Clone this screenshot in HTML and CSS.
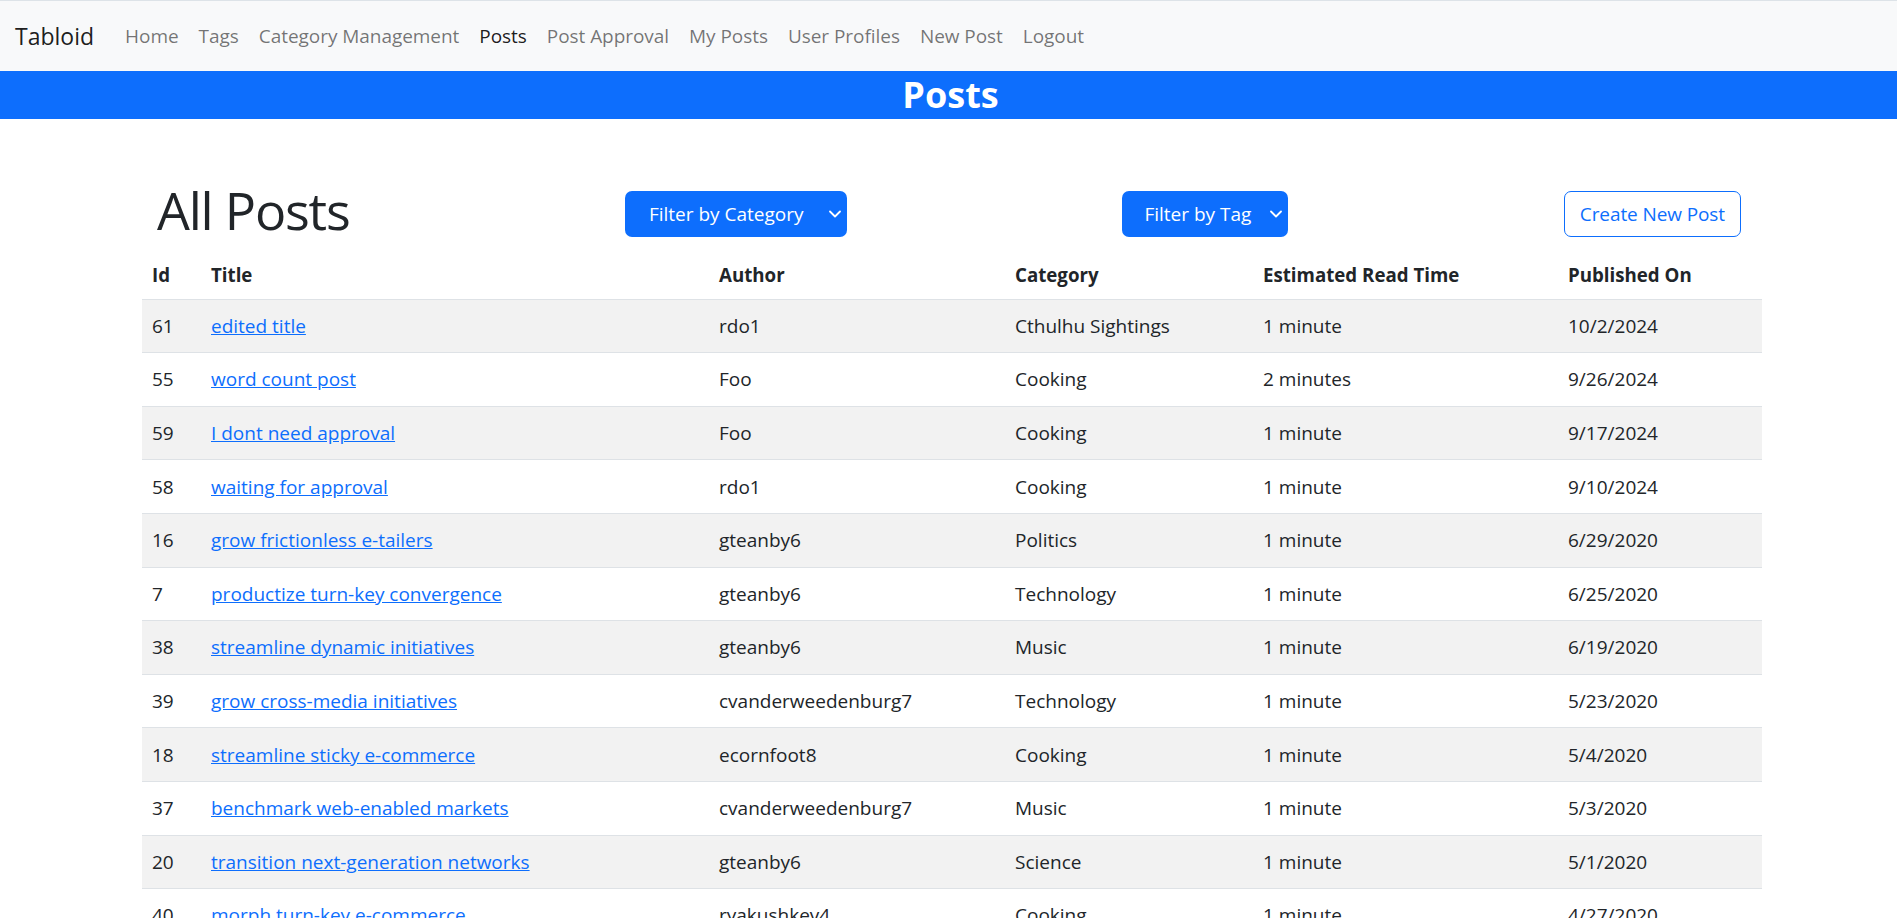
FILE: index.html
```html
<!DOCTYPE html>
<html lang="en">
<head>
<meta charset="utf-8">
<title>Tabloid</title>
<link rel="stylesheet" href="styles.css">
</head>
<body>
<nav class="navbar">
  <a class="brand" href="#">Tabloid</a>
  <ul class="nav">
    <li><a class="nav-link" href="#">Home</a></li>
    <li><a class="nav-link" href="#">Tags</a></li>
    <li><a class="nav-link" href="#">Category Management</a></li>
    <li><a class="nav-link active" href="#">Posts</a></li>
    <li><a class="nav-link" href="#">Post Approval</a></li>
    <li><a class="nav-link" href="#">My Posts</a></li>
    <li><a class="nav-link" href="#">User Profiles</a></li>
    <li><a class="nav-link" href="#">New Post</a></li>
    <li><a class="nav-link" href="#">Logout</a></li>
  </ul>
</nav>
<header class="page-banner"><h1 class="banner-title">Posts</h1></header>
<main class="container">
  <div class="toolbar">
    <h2 class="page-title">All Posts</h2>
    <button class="select-btn select-cat" type="button"><span>Filter by Category</span><svg class="chev" viewBox="0 0 12 8" width="12" height="8"><path d="M1 1.5l5 5 5-5" fill="none" stroke="#fff" stroke-width="1.8" stroke-linecap="round" stroke-linejoin="round"/></svg></button>
    <button class="select-btn select-tag" type="button"><span>Filter by Tag</span><svg class="chev" viewBox="0 0 12 8" width="12" height="8"><path d="M1 1.5l5 5 5-5" fill="none" stroke="#fff" stroke-width="1.8" stroke-linecap="round" stroke-linejoin="round"/></svg></button>
    <button class="outline-btn" type="button">Create New Post</button>
  </div>
  <table class="posts">
    <colgroup>
      <col class="c-id"><col class="c-title"><col class="c-author"><col class="c-cat"><col class="c-time"><col class="c-date">
    </colgroup>
    <thead>
      <tr><th>Id</th><th>Title</th><th>Author</th><th>Category</th><th>Estimated Read Time</th><th>Published On</th></tr>
    </thead>
    <tbody>
      <tr><td>61</td><td><a href="#">edited title</a></td><td>rdo1</td><td>Cthulhu Sightings</td><td>1 minute</td><td>10/2/2024</td></tr>
      <tr><td>55</td><td><a href="#">word count post</a></td><td>Foo</td><td>Cooking</td><td>2 minutes</td><td>9/26/2024</td></tr>
      <tr><td>59</td><td><a href="#">I dont need approval</a></td><td>Foo</td><td>Cooking</td><td>1 minute</td><td>9/17/2024</td></tr>
      <tr><td>58</td><td><a href="#">waiting for approval</a></td><td>rdo1</td><td>Cooking</td><td>1 minute</td><td>9/10/2024</td></tr>
      <tr><td>16</td><td><a href="#">grow frictionless e-tailers</a></td><td>gteanby6</td><td>Politics</td><td>1 minute</td><td>6/29/2020</td></tr>
      <tr><td>7</td><td><a href="#">productize turn-key convergence</a></td><td>gteanby6</td><td>Technology</td><td>1 minute</td><td>6/25/2020</td></tr>
      <tr><td>38</td><td><a href="#">streamline dynamic initiatives</a></td><td>gteanby6</td><td>Music</td><td>1 minute</td><td>6/19/2020</td></tr>
      <tr><td>39</td><td><a href="#">grow cross-media initiatives</a></td><td>cvanderweedenburg7</td><td>Technology</td><td>1 minute</td><td>5/23/2020</td></tr>
      <tr><td>18</td><td><a href="#">streamline sticky e-commerce</a></td><td>ecornfoot8</td><td>Cooking</td><td>1 minute</td><td>5/4/2020</td></tr>
      <tr><td>37</td><td><a href="#">benchmark web-enabled markets</a></td><td>cvanderweedenburg7</td><td>Music</td><td>1 minute</td><td>5/3/2020</td></tr>
      <tr><td>20</td><td><a href="#">transition next-generation networks</a></td><td>gteanby6</td><td>Science</td><td>1 minute</td><td>5/1/2020</td></tr>
      <tr><td>40</td><td><a href="#">morph turn-key e-commerce</a></td><td>ryakushkev4</td><td>Cooking</td><td>1 minute</td><td>4/27/2020</td></tr>
    </tbody>
  </table>
</main>
</body>
</html>
```

FILE: styles.css
```css
html, body {
  margin: 0;
  overflow: hidden;
}
body {
  font-family: "Open Sans", "Noto Sans", sans-serif;
  font-size: 19px;
  line-height: 30px;
  color: #212529;
  background: #fff;
}
.navbar {
  display: flex;
  align-items: center;
  height: 70px;
  border-top: 1px solid #dde3e8;
  background: #f8f9fa;
  padding: 0 15px;
}
.brand {
  font-size: 23px;
  line-height: 37px;
  color: rgba(0, 0, 0, 0.9);
  text-decoration: none;
  margin-right: 21px;
}
.nav {
  display: flex;
  list-style: none;
  margin: 0;
  padding: 0;
}
.nav-link {
  display: block;
  padding: 8px 10px;
  color: rgba(0, 0, 0, 0.55);
  text-decoration: none;
  letter-spacing: -0.05px;
}
.nav-link.active {
  color: rgba(0, 0, 0, 0.9);
}
.page-banner {
  background: #0d6efd;
  text-align: center;
}
.banner-title {
  margin: 0;
  font-size: 36px;
  line-height: 48px;
  font-weight: 700;
  color: #fff;
  padding-left: 4px;
}
.container {
  width: 1620px;
  margin-left: 142px;
  padding-top: 63px;
}
.toolbar {
  display: flex;
  align-items: center;
  justify-content: space-between;
  padding: 0 21px 0 15px;
}
.page-title {
  margin: 0;
  font-size: 52px;
  line-height: 56px;
  padding-bottom: 8px;
  font-weight: 400;
  letter-spacing: -1.2px;
}
.select-btn {
  display: flex;
  align-items: center;
  justify-content: space-between;
  height: 46px;
  padding: 0 6px 0 24px;
  border: 0;
  border-radius: 7px;
  background: #0d6efd;
  color: #fff;
  font: inherit;
}
.select-cat { width: 222px; }
.select-tag { width: 166px; padding-left: 22px; }
.outline-btn {
  height: 46px;
  padding: 0 15px;
  border: 1px solid #0d6efd;
  border-radius: 7px;
  background: #fff;
  color: #0d6efd;
  font: inherit;
  letter-spacing: -0.1px;
}
.posts {
  width: 1620px;
  table-layout: fixed;
  border-collapse: collapse;
}
.c-id { width: 59px; }
.c-title { width: 508px; }
.c-author { width: 296px; }
.c-cat { width: 248px; }
.c-time { width: 305px; }
.c-date { width: 204px; }
.posts th,
.posts td {
  text-align: left;
  padding: 11.3px 10px;
  border-bottom: 1px solid #dee2e6;
  white-space: nowrap;
}
.posts th {
  font-size: 18.7px;
  font-weight: 700;
  padding-top: 13.5px;
  padding-bottom: 9.1px;
}
.posts tbody tr:nth-child(odd) {
  background: #f2f2f2;
}
.posts a {
  color: #0d6efd;
}
```
